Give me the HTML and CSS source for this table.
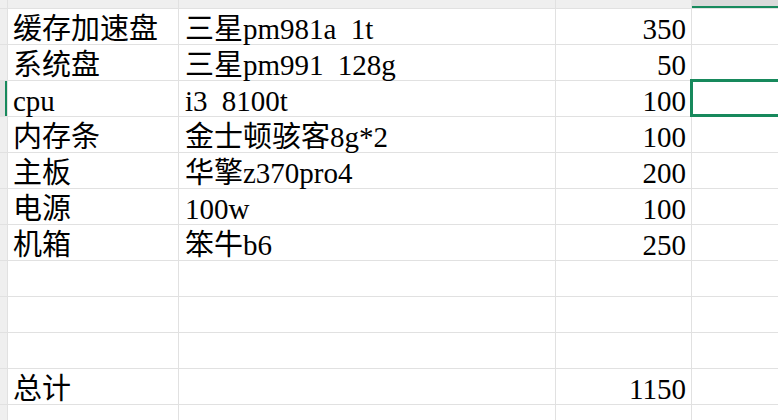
FILE: index.html
```html
<!DOCTYPE html>
<html>
<head>
<meta charset="utf-8">
<title>Sheet</title>
<link rel="stylesheet" href="styles.css">
</head>
<body>
<div class="sheet">
  <div class="hd corner"></div>
  <div class="hd"></div>
  <div class="hd"></div>
  <div class="hd"></div>
  <div class="hd hd-active"></div>

  <div class="rh"></div><div class="c">缓存加速盘</div><div class="c model">三星pm981a 1t</div><div class="c num">350</div><div class="c"></div>
  <div class="rh"></div><div class="c">系统盘</div><div class="c model">三星pm991 128g</div><div class="c num">50</div><div class="c"></div>
  <div class="rh rh-active"></div><div class="c">cpu</div><div class="c model">i3 8100t</div><div class="c num">100</div><div class="c sel"><span class="sel-box"></span></div>
  <div class="rh"></div><div class="c">内存条</div><div class="c model">金士顿骇客8g*2</div><div class="c num">100</div><div class="c"></div>
  <div class="rh"></div><div class="c">主板</div><div class="c model">华擎z370pro4</div><div class="c num">200</div><div class="c"></div>
  <div class="rh"></div><div class="c">电源</div><div class="c model">100w</div><div class="c num">100</div><div class="c"></div>
  <div class="rh"></div><div class="c">机箱</div><div class="c model">笨牛b6</div><div class="c num">250</div><div class="c"></div>
  <div class="rh"></div><div class="c"></div><div class="c"></div><div class="c num"></div><div class="c"></div>
  <div class="rh"></div><div class="c"></div><div class="c"></div><div class="c num"></div><div class="c"></div>
  <div class="rh"></div><div class="c"></div><div class="c"></div><div class="c num"></div><div class="c"></div>
  <div class="rh"></div><div class="c">总计</div><div class="c"></div><div class="c num">1150</div><div class="c"></div>
  <div class="rh"></div><div class="c"></div><div class="c"></div><div class="c num"></div><div class="c"></div>
</div>
</body>
</html>
```

FILE: styles.css
```css
html, body {
  margin: 0;
  padding: 0;
  background: #ffffff;
  overflow: hidden;
  width: 778px;
  height: 420px;
}

.sheet {
  display: grid;
  grid-template-columns: 7px 170px 376px 135px 86px;
  grid-template-rows: 8px repeat(12, 35px);
  gap: 1px;
  background: #e1e1e1;
  width: 778px;
}

.hd {
  background: #efefef;
}

.hd-active {
  background: #dadada;
  box-shadow: inset 0 -2px 0 #17895c;
}

.rh {
  background: #efefef;
}

.rh-active {
  background: #e2e2e2;
  box-shadow: inset -2px 0 0 #17895c;
}

.c {
  background: #ffffff;
  display: flex;
  align-items: flex-end;
  justify-content: flex-start;
  padding: 0 5px 0 6px;
  font-family: "Liberation Serif", "Noto Sans CJK SC", serif;
  font-size: 29px;
  line-height: 29px;
  color: #000000;
  white-space: nowrap;
  overflow: visible;
}

.sheet > .c:nth-child(5n+2) {
  padding-left: 5px;
}

.model {
  word-spacing: 7px;
}

.num {
  justify-content: flex-end;
  padding-right: 5px;
}

.sel {
  position: relative;
}

.sel-box {
  position: absolute;
  top: -2px;
  left: -2px;
  right: -4px;
  bottom: -1px;
  border: 3px solid #17895c;
}
```
